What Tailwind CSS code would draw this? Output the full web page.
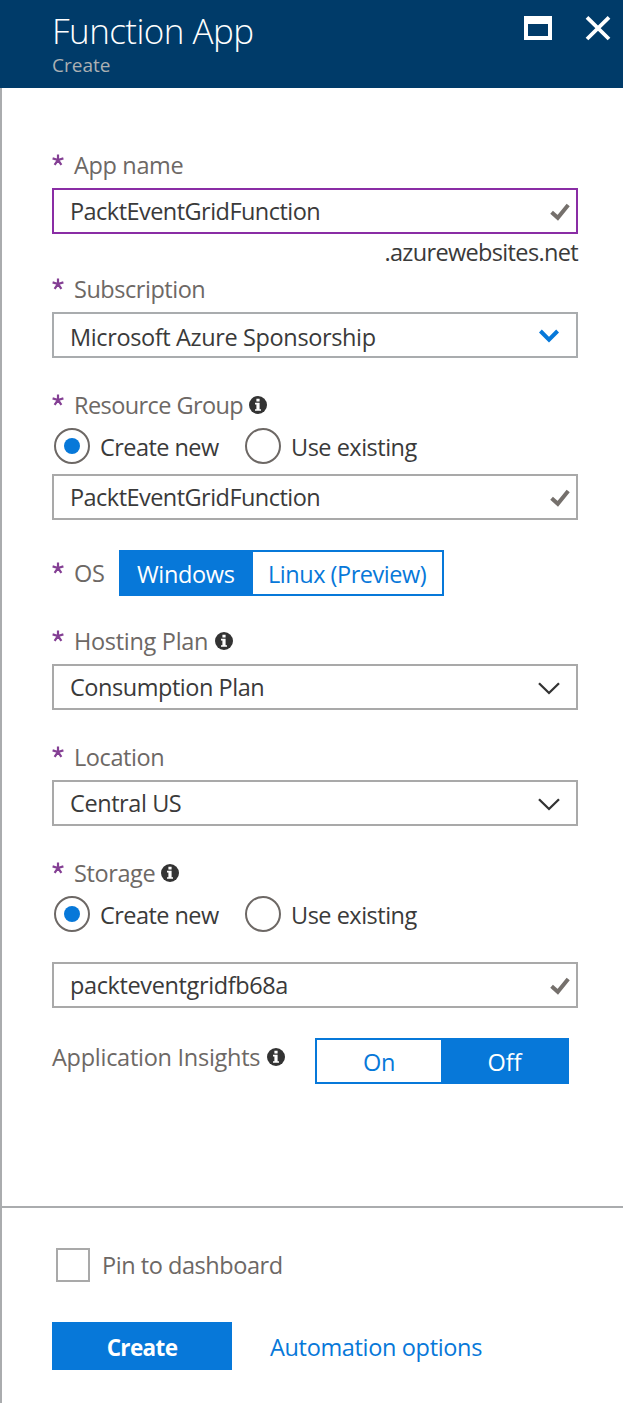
<!DOCTYPE html>
<html lang="en">
<head>
<meta charset="utf-8">
<title>Function App - Create</title>
<script src="https://cdn.jsdelivr.net/npm/@tailwindcss/browser@4"></script>
</head>
<body class="bg-white">
<svg class="hidden">
  <symbol id="star" viewBox="0 0 12 12"><path d="M6 6V0.4M6 6L0.6 4.4M6 6L11.4 4.4M6 6L2.6 10.8M6 6L9.4 10.8" fill="none" stroke="#843f94" stroke-width="2.2"/></symbol>
  <symbol id="info" viewBox="0 0 18 18"><circle cx="9" cy="9" r="9" fill="#333"/><path d="M7.4 2.8h3.2v2.7H7.4zM6 6.8h4.6v6.4H12v1.6H6v-1.6h1.4V8.4H6z" fill="#fff"/></symbol>
  <symbol id="check" viewBox="0 0 20 18"><path d="M1.6 9.2L7.8 14.8L18.2 2" fill="none" stroke="#75706c" stroke-width="4"/></symbol>
  <symbol id="chev" viewBox="0 0 22 13"><path d="M1 1.2L11 11L21 1.2" fill="none" stroke="#333" stroke-width="2.3"/></symbol>
</svg>
<div class="flex h-[1403px] w-[623px] flex-col font-['Open_Sans','Noto_Sans',sans-serif] text-[23.5px] leading-[34px] whitespace-nowrap text-[#3a3a3a]">
  <header class="flex h-[88px] shrink-0 justify-between bg-[#003b69] pl-[52px] pr-[12px]">
    <div class="pt-[8px]">
      <h1 class="text-[35px] leading-[46px] font-light tracking-[-0.55px] text-white">Function App</h1>
      <p class="-mt-px text-[19px] leading-[24px] font-medium text-[#acb0b3]">Create</p>
    </div>
    <div class="flex gap-[33px] pt-[15px]">
      <svg class="mt-px h-6 w-7" viewBox="0 0 28 24"><path fill="#fff" fill-rule="evenodd" d="M0 0h28v24H0zM4 8v12h20V8z"/></svg>
      <svg class="size-[26px]" viewBox="0 0 26 26"><path d="M2 2.3L24 24M24 2.3L2 24" stroke="#fff" stroke-width="3.8"/></svg>
    </div>
  </header>

  <main class="flex h-[1118px] shrink-0 flex-col border-l-2 border-[#aaacae] pl-[50px] pr-[45px] pt-[60px] text-[#3a3a3a]">
    <div class="flex h-[40px] text-[#6d6865]"><svg class="mt-[6px] mr-[10px] size-3"><use href="#star"/></svg><span class="tracking-[-0.35px]">App name</span></div>
    <div class="flex h-[46px] items-center justify-between border-2 border-[#8a2da5] pl-4 pr-[6px]"><span class="tracking-[-0.54px]">PacktEventGridFunction</span><svg class="mt-[2px] h-[18px] w-5"><use href="#check"/></svg></div>
    <div class="pt-px h-[38px] text-right tracking-[-0.65px]">.azurewebsites.net</div>

    <div class="flex h-[40px] text-[#6d6865]"><svg class="mt-[6px] mr-[10px] size-3"><use href="#star"/></svg><span class="tracking-[-0.47px]">Subscription</span></div>
    <div class="flex h-[46px] items-center justify-between border-2 border-[#a9acae] pl-4 pr-[17px]"><span class="relative top-[2px] tracking-[-0.37px]">Microsoft Azure Sponsorship</span><svg class="mt-[2px] h-[14px] w-5" viewBox="0 0 20 14"><path d="M1.4 2L10 10.6L18.6 2" fill="none" stroke="#0778d9" stroke-width="4"/></svg></div>

    <div class="mt-[30px] flex h-[40px] text-[#6d6865]"><svg class="mt-[6px] mr-[10px] size-3"><use href="#star"/></svg><span class="w-[175px] tracking-[-0.58px]">Resource Group</span><svg class="mt-2 size-[18px]"><use href="#info"/></svg></div>
    <div class="flex h-[46px] items-start pl-[2px]">
      <span class="flex size-9 items-center justify-center rounded-full border-2 border-[#6d6865]"><span class="size-4 rounded-full bg-[#0778d9]"></span></span>
      <span class="mt-[2px] ml-[10px] w-[145px] tracking-[-0.55px]">Create new</span>
      <span class="size-9 rounded-full border-2 border-[#6d6865]"></span>
      <span class="mt-[2px] ml-[10px] tracking-[-0.5px]">Use existing</span>
    </div>
    <div class="flex h-[46px] items-center justify-between border-2 border-[#a9a9a9] pl-4 pr-[6px]"><span class="tracking-[-0.54px]">PacktEventGridFunction</span><svg class="mt-[2px] h-[18px] w-5"><use href="#check"/></svg></div>

    <div class="mt-[30px] flex h-[46px] items-center text-[#6d6865]">
      <svg class="mb-[11px] mr-[10px] size-3"><use href="#star"/></svg><span class="w-[45px] tracking-[-0.2px]">OS</span>
      <div class="flex h-[46px] w-[325px] border-2 border-[#0778d9] leading-[45px]">
        <span class="h-full w-[132px] bg-[#0778d9] pl-4 tracking-[-0.35px] text-white">Windows</span>
        <span class="pl-[15px] tracking-[-0.47px] text-[#0778d9]">Linux (Preview)</span>
      </div>
    </div>

    <div class="mt-[28px] flex h-[40px] text-[#6d6865]"><svg class="mt-[6px] mr-[10px] size-3"><use href="#star"/></svg><span class="w-[141px] tracking-[-0.3px]">Hosting Plan</span><svg class="mt-2 size-[18px]"><use href="#info"/></svg></div>
    <div class="flex h-[46px] items-center justify-between border-2 border-[#a9a9a9] pl-4 pr-[16px]"><span class="tracking-[-0.46px]">Consumption Plan</span><svg class="mt-[3px] h-[13px] w-[22px]"><use href="#chev"/></svg></div>

    <div class="mt-[30px] flex h-[40px] text-[#6d6865]"><svg class="mt-[6px] mr-[10px] size-3"><use href="#star"/></svg><span class="tracking-[-0.42px]">Location</span></div>
    <div class="flex h-[46px] items-center justify-between border-2 border-[#a9a9a9] pl-4 pr-[16px]"><span class="tracking-[-0.42px]">Central US</span><svg class="mt-[3px] h-[13px] w-[22px]"><use href="#chev"/></svg></div>

    <div class="mt-[30px] flex h-[40px] text-[#6d6865]"><svg class="mt-[6px] mr-[10px] size-3"><use href="#star"/></svg><span class="w-[87px] tracking-[-0.4px]">Storage</span><svg class="mt-2 size-[18px]"><use href="#info"/></svg></div>
    <div class="flex h-[66px] items-start pl-[2px]">
      <span class="flex size-9 items-center justify-center rounded-full border-2 border-[#6d6865]"><span class="size-4 rounded-full bg-[#0778d9]"></span></span>
      <span class="mt-[2px] ml-[10px] w-[145px] tracking-[-0.55px]">Create new</span>
      <span class="size-9 rounded-full border-2 border-[#6d6865]"></span>
      <span class="mt-[2px] ml-[10px] tracking-[-0.5px]">Use existing</span>
    </div>
    <div class="flex h-[46px] items-center justify-between border-2 border-[#a9a9a9] pl-4 pr-[6px]"><span class="tracking-[-0.38px]">packteventgridfb68a</span><svg class="mt-[2px] h-[18px] w-5"><use href="#check"/></svg></div>

    <div class="mt-[30px] flex h-[46px] text-[#6d6865]">
      <span class="mt-[2px] w-[215px] tracking-[-0.27px]">Application Insights</span><svg class="mt-[10px] mr-[30px] size-[18px]"><use href="#info"/></svg>
      <div class="flex w-[254px] border-2 border-[#0778d9] text-center leading-[45px]">
        <span class="w-[124px] tracking-[-0.35px] text-[#0778d9]">On</span>
        <span class="h-full flex-1 bg-[#0778d9] pl-px text-white">Off</span>
      </div>
    </div>
  </main>

  <footer class="flex-1 border-l-2 border-[#aaacae] text-[#6d6865]">
    <div class="h-[2px] bg-[#aaacae]"></div>
    <div class="flex h-[114px] pl-[54px] pt-10">
      <span class="mr-[12px] size-[34px] border-2 border-[#a9a9a9]"></span><span class="tracking-[-0.45px]">Pin to dashboard</span>
    </div>
    <div class="flex pl-[50px] leading-[51px]">
      <span class="mr-[38px] h-12 w-[180px] bg-[#0778d9] text-center text-[22.5px] font-bold tracking-[-0.65px] text-white">Create</span>
      <span class="tracking-[-0.34px] text-[#0778d9]">Automation options</span>
    </div>
  </footer>
</div>
</body>
</html>
